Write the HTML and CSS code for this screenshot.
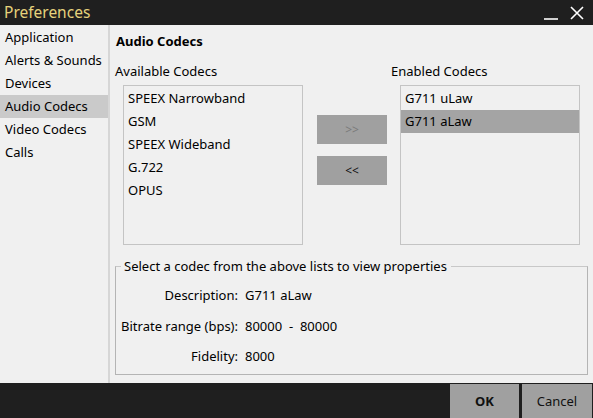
FILE: index.html
```html
<!DOCTYPE html>
<html lang="en">
<head>
  <meta charset="utf-8">
  <title>Preferences</title>
  <link rel="stylesheet" href="styles.css">
</head>
<body>
  <div class="window">
    <div class="titlebar">
      <span class="title">Preferences</span>
      <div class="controls">
        <span class="ctl-min"></span>
        <svg class="ctl-close" width="14" height="14" viewBox="0 0 14 14">
          <path d="M1 1 L13 13 M13 1 L1 13" stroke="#fff" stroke-width="1.6"/>
        </svg>
      </div>
    </div>

    <div class="main">
      <ul class="sidebar">
        <li>Application</li>
        <li>Alerts &amp; Sounds</li>
        <li>Devices</li>
        <li class="active">Audio Codecs</li>
        <li>Video Codecs</li>
        <li>Calls</li>
      </ul>

      <div class="content">
        <h2 class="heading">Audio Codecs</h2>

        <div class="codecs">
          <div class="col-left">
            <div class="label">Available Codecs</div>
            <ul class="listbox">
              <li>SPEEX Narrowband</li>
              <li>GSM</li>
              <li>SPEEX Wideband</li>
              <li>G.722</li>
              <li>OPUS</li>
            </ul>
          </div>
          <div class="col-buttons">
            <button class="move disabled">&gt;&gt;</button>
            <button class="move">&lt;&lt;</button>
          </div>
          <div class="col-right">
            <div class="label">Enabled Codecs</div>
            <ul class="listbox">
              <li>G711 uLaw</li>
              <li class="selected">G711 aLaw</li>
            </ul>
          </div>
        </div>

        <fieldset class="props">
          <legend>Select a codec from the above lists to view properties</legend>
          <div class="prop-row"><span class="prop-key">Description:</span><span>G711 aLaw</span></div>
          <div class="prop-row"><span class="prop-key">Bitrate range (bps):</span><span>80000&nbsp; - &nbsp;80000</span></div>
          <div class="prop-row"><span class="prop-key">Fidelity:</span><span>8000</span></div>
        </fieldset>
      </div>
    </div>

    <div class="footer">
      <button class="btn btn-ok">OK</button>
      <button class="btn">Cancel</button>
    </div>
  </div>
</body>
</html>
```

FILE: styles.css
```css
body {
  margin: 0;
  padding: 0;
  font-family: "Noto Sans", "Open Sans", sans-serif;
  font-size: 13px;
  color: #000;
  background: #1f1f1f;
}
ul {
  list-style: none;
  margin: 0;
  padding: 0;
}
.window {
  width: 593px;
  height: 418px;
  display: flex;
  flex-direction: column;
}
.titlebar {
  height: 25px;
  background: #1f1f1f;
  display: flex;
  align-items: center;
  justify-content: space-between;
}
.title {
  color: #e6d27c;
  font-size: 15.5px;
  padding-left: 4px;
  margin-top: -1px;
}
.controls {
  display: flex;
  align-items: center;
  gap: 12px;
  padding-right: 9px;
}
.ctl-min {
  width: 14px;
  height: 2px;
  background: #d0d0d0;
  margin-top: 12px;
}
.main {
  flex: 1;
  display: flex;
  background: #f0f0f0;
  min-height: 0;
}
.sidebar {
  width: 108px;
  border-right: 2px solid #d6d6d6;
  padding-top: 1px;
}
.sidebar li {
  height: 23px;
  line-height: 23px;
  padding-left: 5px;
  white-space: nowrap;
}
.sidebar li.active {
  background: #cacaca;
}
.content {
  flex: 1;
  padding: 0 5px 0 5px;
}
.heading {
  font-size: 13px;
  font-weight: bold;
  margin: 0;
  padding: 7px 0 0 1px;
  height: 28px;
}
.codecs {
  display: flex;
}
.label {
  height: 15px;
  line-height: 15px;
  margin-top: 4px;
  margin-bottom: 6px;
}
.listbox {
  width: 178px;
  height: 157px;
  border: 1px solid #c4c4c4;
  padding-top: 1px;
}
.listbox li {
  height: 23px;
  line-height: 23px;
  padding-left: 4px;
}
.listbox li.selected {
  background: #a4a4a4;
}
.col-left .listbox {
  margin-left: 8px;
}
.col-buttons {
  display: flex;
  flex-direction: column;
  gap: 12px;
  margin-left: 14px;
  padding-top: 55px;
}
.move {
  width: 70px;
  height: 29px;
  border: none;
  background: #a0a0a0;
  font-family: inherit;
  font-size: 12px;
  color: #111;
  padding: 0;
}
.move.disabled {
  color: #7a7a7a;
}
.col-right {
  margin-left: 4px;
}
.col-right .listbox {
  margin-left: 9px;
}
.props {
  margin: 12px 0 0 0;
  width: 473px;
  height: 118px;
  box-sizing: border-box;
  border: 1px solid #b4b4b4;
  border-top-color: #c8c8c8;
  padding: 5px 0 0 0;
}
.props legend {
  padding: 0 4px 0 3px;
  margin-left: 5px;
}
.prop-row {
  display: flex;
  height: 30.5px;
  line-height: 30px;
  gap: 7px;
}
.prop-key {
  width: 122px;
  text-align: right;
}
.footer {
  height: 35px;
  background: #1f1f1f;
  display: flex;
  justify-content: flex-end;
  align-items: flex-end;
  gap: 3px;
  padding-right: 1px;
}
.btn {
  width: 70px;
  height: 34px;
  border: none;
  background: #a0a0a0;
  font-family: inherit;
  font-size: 13px;
  color: #111;
  padding: 0;
}
.btn-ok {
  width: 69px;
  font-weight: bold;
}
```
